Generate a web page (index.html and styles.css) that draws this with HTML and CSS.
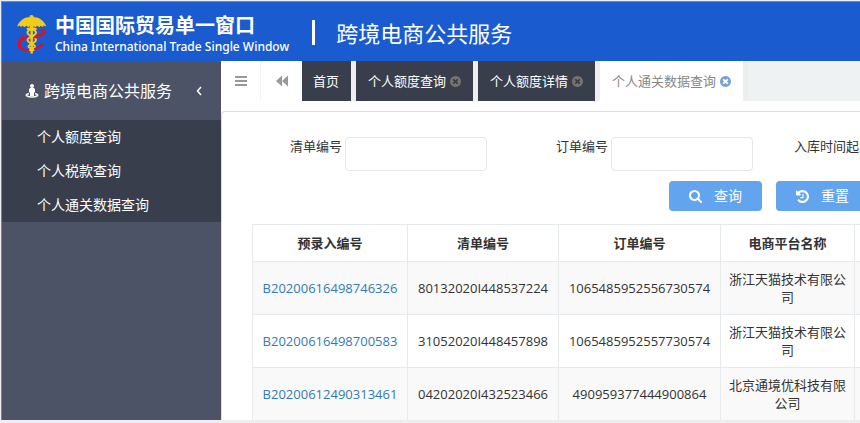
FILE: index.html
```html
<!DOCTYPE html>
<html lang="zh-CN">
<head>
<meta charset="utf-8">
<meta name="viewport" content="width=device-width, initial-scale=1">
<title>跨境电商公共服务</title>
<link rel="stylesheet" href="styles.css">
</head>
<body>
<svg class="sprite" aria-hidden="true">
  <symbol id="close" viewBox="128 128 1536 1536"><path d="M1277 1122q0-26-19-45l-181-181 181-181q19-19 19-45 0-27-19-46l-90-90q-19-19-46-19-26 0-45 19l-181 181-181-181q-19-19-45-19-27 0-46 19l-90 90q-19 19-19 46 0 26 19 45l181 181-181 181q-19 19-19 45 0 27 19 46l90 90q19 19 46 19 26 0 45-19l181-181 181 181q19 19 45 19 27 0 46-19l90-90q19-19 19-46zm387-226q0 209-103 385.5t-279.5 279.5-385.5 103-385.5-103-279.5-279.5-103-385.5 103-385.5 279.5-279.5 385.5-103 385.5 103 279.5 279.5 103 385.5z"/></symbol>
</svg>
<div class="app">
  <header class="header">
    <svg class="logo" viewBox="0 0 30 40" aria-hidden="true">
      <path d="M23.500 16.500C28.500 14 29.500 18 24.500 20.500C17 24 4 22 1.800 28.500C.5 33 5 36.500 10.500 36C16 35.600 22 34 26 29.500" fill="none" stroke="#e01020" stroke-width="2"/>
      <path d="M6 22C1 24-.5 29 3 33.500L6.500 34.500C2 30 3 25.500 8 22.500z" fill="#e01020"/>
      <path d="M14.500 1C16.200 1 17 2.300 16.800 3.500C20 2.500 26 5 29.500 12.500L26.500 11.500L26 13L23.500 11.800L22.500 13.200L20 11.800L18.500 13.200L16.500 12V15H13V12L11 13.200L9.500 11.800L7 13.200L6 11.800L3.500 13L3 11.500L0 12.500C3.500 5 9.500 2.500 12.700 3.500C12.300 2 13 1 14.500 1z" fill="#f4cb18"/>
      <path d="M14.700 11V39.500" stroke="#f4cb18" stroke-width="2.400"/>
      <path d="M10 15.500C11.500 13 19 16 19 18.500C19 22 10.500 23 10.500 26C10.500 29 18 30 18 32.500C18 34.500 13 34 13 37M19.500 15.500C18 13 10.500 16 10.500 18.500C10.500 22 19 23 19 26C19 29 11.500 30 11.500 32.500C11.500 34.500 16.500 34 16.500 37" fill="none" stroke="#f4cb18" stroke-width="2"/>
      <path d="M16 24C21 23 25 21.500 27 18.500M17 35C20 34.300 23.500 32.500 26 30" fill="none" stroke="#e01020" stroke-width="1.600"/>
    </svg>
    <div class="brand">
      <div class="brand-name">中国国际贸易单一窗口</div>
      <div class="brand-en">China International Trade Single Window</div>
    </div>
    <h1 class="system">跨境电商公共服务</h1>
  </header>
  <div class="body">
    <nav class="sidebar">
      <button class="group" type="button">
        <svg class="person" viewBox="0 0 14 14" fill="currentColor" aria-hidden="true"><circle cx="7" cy="2" r="2"/><path d="M5.500 4h3Q10 4 10 5.500V8.500H9V12H5V8.500H4V5.500Q4 4 5.500 4z"/><path d="M4 9.700C.8 10.200.8 11.300 2 12C4.500 13.300 9.500 13.300 12 12C13.200 11.300 13.200 10.200 10 9.700" fill="none" stroke="currentColor" stroke-width="1.500"/></svg>
        <span>跨境电商公共服务</span>
        <svg class="angle" viewBox="0 0 6 10" aria-hidden="true"><path d="M5 1L1.500 5L5 9" fill="none" stroke="currentColor" stroke-width="1.500"/></svg>
      </button>
      <div class="submenu">
        <a href="#">个人额度查询</a>
        <a href="#">个人税款查询</a>
        <a href="#">个人通关数据查询</a>
      </div>
    </nav>
    <main class="main">
      <div class="tabs">
        <button class="tool" type="button" aria-label="菜单"><svg viewBox="0 0 12 12" aria-hidden="true"><path d="M0 2h12M0 6h12M0 10h12" stroke="currentColor" stroke-width="2"/></svg></button>
        <button class="tool" type="button" aria-label="向左"><svg viewBox="0 0 12 12" fill="currentColor" aria-hidden="true"><path d="M6 .5V11.500L0 6zM12 .5V11.500L6 6z"/></svg></button>
        <div class="tab-list">
          <a class="tab home" href="#">首页</a>
          <a class="tab" href="#">个人额度查询<svg class="close" aria-hidden="true"><use href="#close"/></svg></a>
          <a class="tab" href="#">个人额度详情<svg class="close" aria-hidden="true"><use href="#close"/></svg></a>
          <a class="tab active" href="#">个人通关数据查询<svg class="close" aria-hidden="true"><use href="#close"/></svg></a>
        </div>
      </div>
      <section class="panel">
        <form class="search">
          <div class="fields">
            <div class="field"><label for="list-no">清单编号</label><input id="list-no" type="text"></div>
            <div class="field"><label for="order-no">订单编号</label><input id="order-no" type="text"></div>
            <div class="field"><label for="start">入库时间起</label><input id="start" type="text"></div>
          </div>
          <div class="actions">
            <button class="btn" type="button"><svg viewBox="64 128 1664 1664" fill="currentColor" aria-hidden="true"><path d="M1216 832q0-185-131.500-316.500t-316.500-131.500-316.500 131.500-131.500 316.500 131.500 316.500 316.500 131.500 316.500-131.500 131.500-316.500zm512 832q0 52-38 90t-90 38q-54 0-90-38l-343-342q-179 124-399 124-143 0-273.500-55.500t-225-150-150-225-55.500-273.500 55.500-273.500 150-225 225-150 273.500-55.500 273.500 55.500 225 150 150 225 55.500 273.500q0 220-124 399l343 343q37 37 37 90z"/></svg>查询</button>
            <button class="btn" type="button"><svg viewBox="0 128 1536 1536" fill="currentColor" aria-hidden="true"><path d="M1536 896q0 156-61 298t-164 245-245 164-298 61q-172 0-327-72.500t-264-204.500q-7-10-6.500-22.500t8.500-20.500l137-138q10-9 25-9 16 2 23 12 73 95 179 147t225 52q104 0 198.500-40.500t163.500-109.500 109.500-163.500 40.500-198.500-40.500-198.500-109.500-163.500-163.500-109.500-198.500-40.500q-98 0-188 35.500t-160 101.500l137 138q31 30 14 69-17 40-59 40h-448q-26 0-45-19t-19-45v-448q0-42 40-59 39-17 69 14l130 129q107-101 244.500-156.500t284.500-55.500q156 0 298 61t245 164 164 245 61 298zm-640-288v448q0 14-9 23t-23 9h-320q-14 0-23-9t-9-23v-64q0-14 9-23t23-9h224v-352q0-14 9-23t23-9h64q14 0 23 9t9 23z"/></svg>重置</button>
          </div>
        </form>
        <table class="grid">
          <colgroup><col class="c-pre"><col class="c-list"><col class="c-order"><col class="c-shop"><col></colgroup>
          <thead>
            <tr><th>预录入编号</th><th>清单编号</th><th>订单编号</th><th>电商平台名称</th><td></td></tr>
          </thead>
          <tbody>
            <tr><td><a href="#">B20200616498746326</a></td><td>80132020I448537224</td><td>1065485952556730574</td><td>浙江天猫技术有限公司</td><td></td></tr>
            <tr><td><a href="#">B20200616498700583</a></td><td>31052020I448457898</td><td>1065485952557730574</td><td>浙江天猫技术有限公司</td><td></td></tr>
            <tr><td><a href="#">B20200612490313461</a></td><td>04202020I432523466</td><td>490959377444900864</td><td>北京通境优科技有限公司</td><td></td></tr>
          </tbody>
        </table>
      </section>
    </main>
  </div>
</div>
</body>
</html>
```
FILE: styles.css
```css
* { box-sizing: border-box; }

body {
  display: flex;
  height: 100vh;
  margin: 0;
  padding: 1px 0 3px 1px;
  overflow: hidden;
  background: #eee;
  color: #333;
  font: 13px/18px "Open Sans", "Noto Sans CJK SC", sans-serif;
}

a { color: inherit; text-decoration: none; }
button, input { font: inherit; }
button { border: 0; cursor: pointer; }
svg { display: block; flex: none; }
.sprite { position: absolute; width: 0; height: 0; }

.app {
  display: flex;
  flex: 1;
  flex-direction: column;
  min-width: 0;
  overflow: hidden;
  border-left: 1px solid #7b8194;
  background: #fff;
}

.header {
  display: flex;
  flex: none;
  align-items: center;
  height: 60px;
  padding: 0 15px;
  border-top: 1px solid #5f8bd8;
  background: #1a5bd0;
  color: #fff;
  white-space: nowrap;
}

.logo { width: 30px; height: 40px; margin-top: 5px; }
.brand { margin: 7px 0 0 8px; }
.brand-name { font-size: 20px; line-height: 24px; font-weight: 700; }
.brand-en { font-family: "Noto Sans", sans-serif; font-size: 12px; line-height: 18px; font-weight: 500; }

.system {
  display: flex;
  align-items: center;
  gap: 21px;
  margin: 2px 0 0 23px;
  font-size: 22px;
  line-height: 32px;
  font-weight: 400;
}

.system::before {
  width: 3px;
  height: 25px;
  background: #fff;
  content: "";
}

.body { display: flex; flex: 1; min-height: 0; }

.sidebar {
  flex: none;
  width: 219px;
  background: #4c5366;
  color: #fff;
}

.group {
  display: flex;
  align-items: center;
  width: 100%;
  height: 59px;
  padding: 0 19px 0 23px;
  background: none;
  color: #fff;
  font-size: 16px;
  line-height: 24px;
}

.person { width: 14px; height: 14px; margin-right: 5px; }
.angle { width: 6px; height: 10px; margin-left: auto; }

.submenu { background: #383e4b; }
.submenu a {
  display: block;
  padding-left: 35px;
  font-size: 14px;
  line-height: 34px;
}

.main { display: flex; flex: 1; flex-direction: column; min-width: 0; }

.tabs {
  display: flex;
  flex: none;
  height: 40px;
  background: #eef2f3;
}

.tool {
  display: grid;
  flex: none;
  place-items: center;
  width: 40px;
  padding: 0;
  border-right: 1px solid #f3f3f3;
  background: #fff;
  color: #999;
}

.tool svg { width: 12px; height: 12px; }
.tool + .tool { width: 41px; border-right: 0; }

.tab-list { display: flex; }

.tab {
  display: flex;
  align-items: center;
  gap: 4px;
  padding: 0 12px;
  border-right: 5px solid #eee;
  background: #383e4b;
  color: #fff;
  line-height: 40px;
  white-space: nowrap;
}

.tab.home { padding-left: 11px; }
.tab.active { background: #fff; color: #888; }
.close { width: 11px; height: 11px; fill: #77736f; }
.active .close { fill: #7ba2d2; }

.panel {
  flex: 1;
  min-height: 0;
  margin-top: 10px;
  padding: 25px 0 0 30px;
  overflow: hidden;
  border-top: 1px solid #ddd;
  border-left: 1px solid #ddd;
  border-top-left-radius: 4px;
}

.fields { display: flex; height: 34px; }

.field {
  display: flex;
  flex: none;
  justify-content: flex-end;
  gap: 3px;
  width: 266px;
}

.field:first-child { width: 235px; }
.field:last-child { width: auto; margin-left: 41px; }
.field label { white-space: nowrap; }

.field input {
  width: 142px;
  height: 34px;
  border: 1px solid #e5e6e7;
  border-radius: 4px;
  background: #fff;
}

.actions {
  display: flex;
  gap: 14px;
  margin: 10px 0 13px 417px;
}

.btn {
  display: flex;
  flex: none;
  align-items: center;
  gap: 12px;
  height: 30px;
  padding: 0 20px;
  border-radius: 4px;
  background: #62a4ed;
  color: #fff;
  font-size: 14px;
}

.btn svg { width: 13px; height: 13px; }

.grid {
  width: 100%;
  border-collapse: collapse;
  table-layout: fixed;
  text-align: center;
}

.c-pre { width: 155px; }
.c-list { width: 151px; }
.c-order { width: 162px; }
.c-shop { width: 134px; }

.grid th, .grid td {
  padding: 8px;
  border: 1px solid #e7eaec;
}

.grid th { padding: 9px 8px; font-weight: 700; }
.grid th:last-child, .grid td:last-child { padding: 0; border-right: 0; }
.grid tbody tr:nth-child(odd) { background: #f9f9f9; }
.grid a { color: #337ab7; }
```
